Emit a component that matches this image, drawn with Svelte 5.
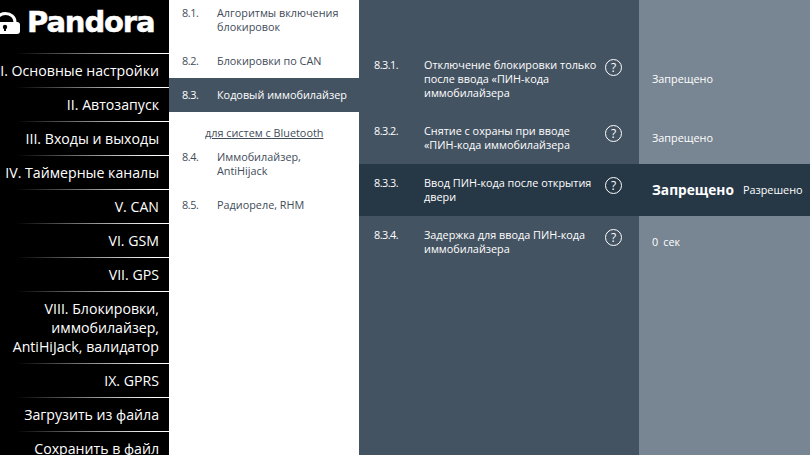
<script>
  const nav = [
    ['I. Основные настройки'],
    ['II. Автозапуск'],
    ['III. Входы и выходы'],
    ['IV. Таймерные каналы'],
    ['V. CAN'],
    ['VI. GSM'],
    ['VII. GPS'],
    ['VIII. Блокировки,', 'иммобилайзер,', 'AntiHiJack, валидатор'],
    ['IX. GPRS'],
    ['Загрузить из файла'],
    ['Сохранить в файл']
  ];

  const params = [
    { num: '8.3.1.', text: ['Отключение блокировки только', 'после ввода «ПИН-кода', 'иммобилайзера'], value: 'Запрещено' },
    { num: '8.3.2.', text: ['Снятие с охраны при вводе', '«ПИН-кода иммобилайзера'], value: 'Запрещено' },
    { num: '8.3.3.', text: ['Ввод ПИН-кода после открытия', 'двери'], value: 'Запрещено', alt: 'Разрешено', active: true },
    { num: '8.3.4.', text: ['Задержка для ввода ПИН-кода', 'иммобилайзера'], value: '0', unit: 'сек' }
  ];
</script>

<div class="page">
  <aside class="sidebar">
    <div class="logo">
      <!-- lock mark, its left part is cut by the window edge -->
      <svg class="lock" width="29" height="22" viewBox="0 0 29 22">
        <path d="M5 11V10a9.5 8.5 0 0 1 19 0v1" fill="none" stroke="#fff" stroke-width="3" />
        <rect x="0" y="10" width="29" height="12" rx="3" fill="#fff" />
        <circle cx="14" cy="15" r="2.2" fill="#000" />
        <rect x="13" y="15" width="2" height="4" fill="#000" />
      </svg>
      <span class="logo-text">Pandora</span>
    </div>
    {#each nav as lines}
      <div class="nav-item">
        {#each lines as line}
          <div class="nav-line"><span>{line}</span></div>
        {/each}
      </div>
    {/each}
  </aside>

  <nav class="menu">
    <div class="menu-item"><span class="num">8.1.</span><span>Алгоритмы включения<br />блокировок</span></div>
    <div class="menu-item"><span class="num">8.2.</span><span>Блокировки по CAN</span></div>
    <div class="menu-item active"><span class="num">8.3.</span><span>Кодовый иммобилайзер</span></div>
    <div class="menu-heading"><u>для систем с Bluetooth</u></div>
    <div class="menu-item"><span class="num">8.4.</span><span>Иммобилайзер,<br />AntiHijack</span></div>
    <div class="menu-item"><span class="num">8.5.</span><span>Радиореле, RHM</span></div>
  </nav>

  <main class="content">
    {#each params as p}
      <div class="row" class:active={p.active}>
        <div class="cell-left">
          <span class="row-num">{p.num}</span>
          <span class="row-text">
            {#each p.text as line}
              <div>{line}</div>
            {/each}
          </span>
          <span class="help">?</span>
        </div>
        <div class="cell-right">
          {#if p.active}
            <b class="selected">{p.value}</b>
            <span class="alt">{p.alt}</span>
          {:else if p.unit}
            <span>{p.value}</span>
            <span class="unit">{p.unit}</span>
          {:else}
            <span>{p.value}</span>
          {/if}
        </div>
      </div>
    {/each}
  </main>
</div>

<style>
  :global(body) {
    margin: 0;
    overflow: hidden;
  }

  .page {
    display: flex;
    width: 810px;
    height: 455px;
    overflow: hidden;
    font-family: "Open Sans", "Liberation Sans", sans-serif;
    font-size: 10.85px;
    line-height: 14px;
  }

  .sidebar {
    width: 169px;
    flex: none;
    background: #000;
    color: #fff;
  }

  .logo {
    height: 53px;
    display: flex;
    align-items: center;
    gap: 7px;
    margin-left: -9px;
  }

  .lock {
    flex: none;
    margin-top: -8px;
  }

  .logo-text {
    font-family: "DejaVu Sans", sans-serif;
    font-weight: 700;
    font-size: 29px;
    letter-spacing: -1.1px;
    -webkit-text-stroke: 0.5px #fff;
    margin-top: -9px;
  }

  .nav-item {
    padding: 7px 10px 7px 0;
    border-top: 1px solid;
    border-image: linear-gradient(90deg, #000 10%, #fff 90%) 1;
    font-size: 14.15px;
    line-height: 19px;
  }

  .nav-line {
    display: flex;
    justify-content: flex-end;
    white-space: nowrap;
  }

  .menu {
    width: 190px;
    flex: none;
    margin-top: -4px;
    background: #fff;
    color: #3f4c59;
  }

  .menu-item {
    display: flex;
    padding: 10px 0 10px 13px;
  }

  .menu-item.active {
    background: #445362;
    color: #fff;
  }

  .num {
    width: 35px;
    flex: none;
    letter-spacing: -0.4px;
  }

  .menu-heading {
    padding: 14px 0 0 36px;
  }

  .content {
    flex: 1;
    padding-top: 46px;
    background: linear-gradient(90deg, #445362 280px, #788592 280px);
    color: #fff;
  }

  .row {
    display: flex;
  }

  .row.active {
    background: #263746;
  }

  .cell-left {
    width: 280px;
    flex: none;
    display: flex;
    padding: 12px 0;
  }

  .row-num {
    width: 50px;
    margin-left: 15px;
    flex: none;
    letter-spacing: -0.5px;
  }

  .row-text {
    width: 181px;
    flex: none;
  }

  .help {
    width: 15px;
    height: 15px;
    border: 1px solid #fff;
    border-radius: 50%;
    text-align: center;
    line-height: 15px;
    font-size: 12px;
    margin-top: 1px;
  }

  .cell-right {
    flex: 1;
    display: flex;
    align-items: center;
    padding-left: 13px;
    white-space: nowrap;
  }

  .selected {
    font-size: 13.7px;
    margin-right: 9px;
  }

  .unit {
    margin-left: 5px;
  }
</style>
